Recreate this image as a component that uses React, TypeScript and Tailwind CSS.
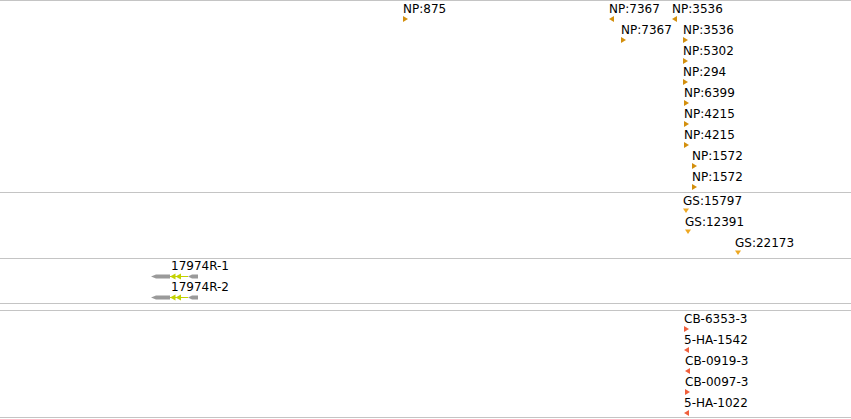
type Strand = 'right' | 'left' | 'down';

type Feature = {
  label: string;
  x: number;
  row: number;
  strand: Strand;
};

const NP = '#d38f0d';
const GS = '#eea822';
const CB = '#f0603c';

const npFeatures: Feature[] = [
  { label: 'NP:875', x: 403, row: 0, strand: 'right' },
  { label: 'NP:7367', x: 609, row: 0, strand: 'left' },
  { label: 'NP:3536', x: 672, row: 0, strand: 'left' },
  { label: 'NP:7367', x: 621, row: 1, strand: 'right' },
  { label: 'NP:3536', x: 683, row: 1, strand: 'right' },
  { label: 'NP:5302', x: 683, row: 2, strand: 'right' },
  { label: 'NP:294', x: 683, row: 3, strand: 'right' },
  { label: 'NP:6399', x: 684, row: 4, strand: 'right' },
  { label: 'NP:4215', x: 684, row: 5, strand: 'right' },
  { label: 'NP:4215', x: 684, row: 6, strand: 'right' },
  { label: 'NP:1572', x: 692, row: 7, strand: 'right' },
  { label: 'NP:1572', x: 692, row: 8, strand: 'right' },
];

const gsFeatures: Feature[] = [
  { label: 'GS:15797', x: 683, row: 0, strand: 'down' },
  { label: 'GS:12391', x: 685, row: 1, strand: 'down' },
  { label: 'GS:22173', x: 735, row: 2, strand: 'down' },
];

const cbFeatures: Feature[] = [
  { label: 'CB-6353-3', x: 684, row: 0, strand: 'right' },
  { label: '5-HA-1542', x: 684, row: 1, strand: 'left' },
  { label: 'CB-0919-3', x: 685, row: 2, strand: 'left' },
  { label: 'CB-0097-3', x: 685, row: 3, strand: 'right' },
  { label: '5-HA-1022', x: 684, row: 4, strand: 'left' },
];

function Marker({ strand, color }: { strand: Strand; color: string }) {
  if (strand === 'down') {
    return (
      <svg width="7" height="6" viewBox="0 0 7 6" className="block">
        <polygon points="0,0.5 6,0.5 3,5" fill={color} />
      </svg>
    );
  }
  const pts = strand === 'right' ? '0,0 5,3 0,6' : '5,0 0,3 5,6';
  return (
    <svg width="6" height="6" viewBox="0 0 6 6" className="block">
      <polygon points={pts} fill={color} />
    </svg>
  );
}

function FeatureTrack({ features, color, height }: { features: Feature[]; color: string; height: string }) {
  return (
    <div className={`relative border-t border-[#c4c4c4] ${height}`}>
      {features.map((f, i) => (
        <div
          key={i}
          className="absolute flex flex-col"
          style={{ left: f.x, top: 1 + f.row * 21 }}
        >
          <span className="whitespace-nowrap text-[12px] leading-[14px] text-black">{f.label}</span>
          <Marker strand={f.strand} color={color} />
        </div>
      ))}
    </div>
  );
}

function Transcript({ label }: { label: string }) {
  return (
    <div className="flex h-[21px] flex-col pl-[151px]">
      <span className="whitespace-nowrap pl-[20px] text-[12px] leading-[13px] text-black">{label}</span>
      <svg width="48" height="7" viewBox="0 0 48 7" className="block">
        <polygon points="0,3.5 5,1.5 19,1.5 19,5.5 5,5.5" fill="#9a9a9a" />
        <line x1="19" y1="3.5" x2="37" y2="3.5" stroke="#c3d200" strokeWidth="1" />
        <polygon points="19,3.5 24.5,0.5 24.5,6.5" fill="#c3d200" />
        <polygon points="24.5,3.5 30,0.5 30,6.5" fill="#c3d200" />
        <polygon points="37,3.5 41,1.5 47,1.5 47,5.5 41,5.5" fill="#9a9a9a" />
      </svg>
    </div>
  );
}

export default function App() {
  return (
    <div className="h-[419px] w-[851px] overflow-hidden bg-white font-['DejaVu_Sans',sans-serif]">
      <FeatureTrack features={npFeatures} color={NP} height="h-[192px]" />
      <FeatureTrack features={gsFeatures} color={GS} height="h-[66px]" />
      <div className="flex h-[45px] flex-col border-t border-[#c4c4c4] pt-[1px]">
        <Transcript label="17974R-1" />
        <Transcript label="17974R-2" />
      </div>
      <div className="h-[7px] border-t border-[#c4c4c4]" />
      <FeatureTrack features={cbFeatures} color={CB} height="h-[107px]" />
      <div className="border-t border-[#c4c4c4]" />
    </div>
  );
}
